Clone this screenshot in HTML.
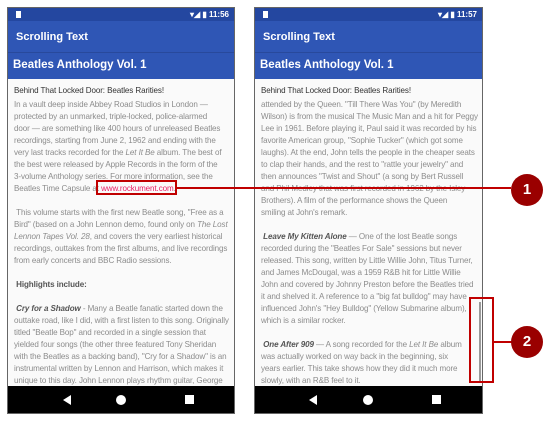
<!DOCTYPE html>
<html><head><style>
*{margin:0;padding:0;box-sizing:border-box}
body{width:551px;height:431px;background:#fff;position:relative;overflow:hidden;font-family:"Liberation Sans",sans-serif}
.ph{position:absolute;top:7px;height:407px;border:1px solid #666;background:#fafafa;overflow:hidden}
.sb{height:13px;background:#2447a0;color:#fff;font-size:8px;font-weight:bold;text-align:right;padding-right:5px;line-height:13px;position:relative}
.sb i{position:absolute;left:8px;top:3px;width:5px;height:7px;background:#fff}
.tb{height:32px;background:#2f56b5;color:#fff;font-size:11px;font-weight:bold;padding-left:8px;line-height:32px;border-bottom:1px solid #28499c}
.hd{height:26px;background:#2f56b5;color:#fff;font-size:11.5px;font-weight:bold;padding-left:5px;line-height:25px}
.ct{padding:6px 0 0 6px;font-size:8.05px;line-height:12px;color:#8c8c8c;white-space:nowrap;letter-spacing:-0.1px}
.ct .t{color:#333;margin-bottom:2px}
.ct b{color:#555}
.ct p{margin-bottom:12px}
.nav{position:absolute;left:0;right:0;bottom:0;height:27px;background:#000}
.nav span{position:absolute;top:9px;background:#fff}
a{color:#e91e63;text-decoration:none}
</style></head><body>
<div class="ph" style="left:7px;width:228px">
<div class="sb"><i></i>▾◢ ▮ 11:56</div>
<div class="tb">Scrolling Text</div>
<div class="hd">Beatles Anthology Vol. 1</div>
<div class="ct"><div class="t">Behind That Locked Door: Beatles Rarities!</div>
<p>In a vault deep inside Abbey Road Studios in London —<br>protected by an unmarked, triple-locked, police-alarmed<br>door — are something like 400 hours of unreleased Beatles<br>recordings, starting from June 2, 1962 and ending with the<br>very last tracks recorded for the <i>Let It Be</i> album. The best of<br>the best were released by Apple Records in the form of the<br>3-volume Anthology series. For more information, see the<br>Beatles Time Capsule at <a>www.rockument.com</a>.</p>
<p>&nbsp;This volume starts with the first new Beatle song, "Free as a<br>Bird" (based on a John Lennon demo, found only on <i>The Lost<br>Lennon Tapes Vol. 28</i>, and covers the very earliest historical<br>recordings, outtakes from the first albums, and live recordings<br>from early concerts and BBC Radio sessions.</p>
<p>&nbsp;<b>Highlights include:</b></p>
<p>&nbsp;<b><i>Cry for a Shadow</i></b> - Many a Beatle fanatic started down the<br>outtake road, like I did, with a first listen to this song. Originally<br>titled "Beatle Bop" and recorded in a single session that<br>yielded four songs (the other three featured Tony Sheridan<br>with the Beatles as a backing band), "Cry for a Shadow" is an<br>instrumental written by Lennon and Harrison, which makes it<br>unique to this day. John Lennon plays rhythm guitar, George<br>Harrison plays lead guitar, Paul McCartney plays bass</p></div>
<div class="nav"><span style="left:55px;width:0;height:0;background:none;border-right:8px solid #fff;border-top:5px solid transparent;border-bottom:5px solid transparent"></span><span style="left:108px;width:10px;height:10px;border-radius:50%"></span><span style="left:177px;width:9px;height:9px"></span></div>
</div>
<div class="ph" style="left:254px;width:229px">
<div class="sb"><i></i>▾◢ ▮ 11:57</div>
<div class="tb">Scrolling Text</div>
<div class="hd">Beatles Anthology Vol. 1</div>
<div class="ct"><div class="t">Behind That Locked Door: Beatles Rarities!</div>
<p>attended by the Queen. "Till There Was You" (by Meredith<br>Wilson) is from the musical The Music Man and a hit for Peggy<br>Lee in 1961. Before playing it, Paul said it was recorded by his<br>favorite American group, "Sophie Tucker" (which got some<br>laughs). At the end, John tells the people in the cheaper seats<br>to clap their hands, and the rest to "rattle your jewelry" and<br>then announces "Twist and Shout" (a song by Bert Russell<br>and Phil Medley that was first recorded in 1962 by the Isley<br>Brothers). A film of the performance shows the Queen<br>smiling at John's remark.</p>
<p>&nbsp;<b><i>Leave My Kitten Alone</i></b> — One of the lost Beatle songs<br>recorded during the "Beatles For Sale" sessions but never<br>released. This song, written by Little Willie John, Titus Turner,<br>and James McDougal, was a 1959 R&amp;B hit for Little Willie<br>John and covered by Johnny Preston before the Beatles tried<br>it and shelved it. A reference to a "big fat bulldog" may have<br>influenced John's "Hey Bulldog" (Yellow Submarine album),<br>which is a similar rocker.</p>
<p>&nbsp;<b><i>One After 909</i></b> — A song recorded for the <i>Let It Be</i> album<br>was actually worked on way back in the beginning, six<br>years earlier. This take shows how they did it much more<br>slowly, with an R&amp;B feel to it.</p></div>
<div style="position:absolute;left:224px;top:294px;width:2px;height:80px;background:#999"></div>
<div class="nav"><span style="left:54px;width:0;height:0;background:none;border-right:8px solid #fff;border-top:5px solid transparent;border-bottom:5px solid transparent"></span><span style="left:108px;width:10px;height:10px;border-radius:50%"></span><span style="left:177px;width:9px;height:9px"></span></div>
</div>
<div style="position:absolute;left:96px;top:180px;width:81px;height:15px;border:2px solid #c00000"></div>
<div style="position:absolute;left:177px;top:187px;width:334px;height:2px;background:#c00000"></div>
<div style="position:absolute;left:469px;top:297px;width:25px;height:86px;border:2px solid #c00000"></div>
<div style="position:absolute;left:494px;top:341px;width:18px;height:2px;background:#c00000"></div>
<div style="position:absolute;left:511px;top:174px;width:32px;height:32px;border-radius:50%;background:#9a0000;color:#fff;font-weight:bold;font-size:15px;text-align:center;line-height:32px">1</div>
<div style="position:absolute;left:511px;top:326px;width:32px;height:32px;border-radius:50%;background:#9a0000;color:#fff;font-weight:bold;font-size:15px;text-align:center;line-height:32px">2</div>
</body></html>
